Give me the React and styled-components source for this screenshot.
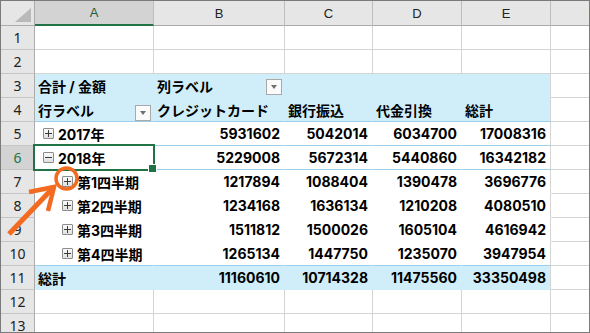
import React from "react";
import styled, { createGlobalStyle, css } from "styled-components";

const BLUE = "#d0eef9";
const BLUE_LINE = "#9dcfec";
const GRID = "#d4d4d4";
const GREEN = "#217346";
const ORANGE = "#f26b21";

const GlobalStyle = createGlobalStyle`
  * { box-sizing: border-box; }
  html, body { margin: 0; padding: 0; background: #fff; }
`;

const Sheet = styled.div`
  position: relative;
  width: 590px;
  height: 333px;
  border: 1px solid #7a7a7a;
  overflow: hidden;
  display: grid;
  grid-template-columns: 34px 119px 131px 88px 89px 89px 84px;
  grid-template-rows: 25px;
  grid-auto-rows: 24px;
  font-family: Inter, "Noto Sans CJK JP", sans-serif;
`;

const Corner = styled.div`
  position: relative;
  background: #e6e6e6;
  border-right: 1px solid #ababab;
  border-bottom: 1px solid #ababab;
  &::after {
    content: "";
    position: absolute;
    right: 3px;
    bottom: 3px;
    border-style: solid;
    border-width: 0 0 14px 16px;
    border-color: transparent transparent #b9b9b9 transparent;
  }
`;

const ColHead = styled.div`
  display: flex;
  align-items: center;
  justify-content: center;
  background: ${(p) => (p.$active ? "#d3d3d3" : "#e6e6e6")};
  color: ${(p) => (p.$active ? "#1d5c38" : "#222")};
  border-right: 1px solid #bdbdbd;
  border-bottom: ${(p) => (p.$active ? `2px solid ${GREEN}` : "1px solid #ababab")};
  font: 13px "Liberation Sans", sans-serif;
`;

const RowHead = styled.div`
  display: flex;
  align-items: center;
  justify-content: center;
  background: ${(p) => (p.$active ? "#d3d3d3" : "#e6e6e6")};
  color: ${(p) => (p.$active ? GREEN : "#222")};
  border-right: 1px solid #ababab;
  border-bottom: 1px solid #c6c6c6;
  font: 14px "Noto Sans", sans-serif;
`;

const Cell = styled.div`
  position: relative;
  display: flex;
  align-items: center;
  justify-content: ${(p) => (p.$num ? "flex-end" : "flex-start")};
  gap: 4px;
  padding: 0 ${(p) => (p.$num ? 4 : 2)}px 0 ${(p) => p.$indent ?? 3}px;
  background: ${(p) => p.$bg || "#fff"};
  border-right: 1px solid ${(p) => p.$right || GRID};
  border-bottom: 1px solid ${(p) => p.$bottom || GRID};
  font-size: 14px;
  font-weight: 700;
  color: #000;
  white-space: nowrap;
  ${(p) =>
    p.$active &&
    css`
      z-index: 2;
    `}
`;

const Label = styled.span`
  flex: none;
`;

const Dropdown = styled.span`
  position: relative;
  flex: none;
  width: 16px;
  height: 16px;
  margin-left: auto;
  align-self: ${(p) => (p.$bottom ? "flex-end" : "center")};
  margin-top: ${(p) => (p.$bottom ? 0 : 2)}px;
  background: #fbfbfb;
  border: 1px solid #a9a9a9;
  &::after {
    content: "";
    position: absolute;
    left: 4px;
    top: 5px;
    border-style: solid;
    border-width: 4px 3.5px 0 3.5px;
    border-color: #6e6e6e transparent transparent transparent;
  }
`;

const Toggle = styled.span`
  position: relative;
  flex: none;
  width: 11px;
  height: 11px;
  border: 1px solid #8c8c8c;
  border-radius: 1px;
  background: linear-gradient(#fbfbfb, #e0e0e0);
  &::before {
    content: "";
    position: absolute;
    left: 1px;
    right: 1px;
    top: 4px;
    height: 1px;
    background: #3a3a3a;
  }
  ${(p) =>
    !p.$open &&
    css`
      &::after {
        content: "";
        position: absolute;
        top: 1px;
        bottom: 1px;
        left: 4px;
        width: 1px;
        background: #3a3a3a;
      }
    `}
`;

const ActiveMark = styled.span`
  position: absolute;
  left: -2px;
  top: -2px;
  right: -2px;
  bottom: -2px;
  border: 2px solid ${GREEN};
  pointer-events: none;
  &::after {
    content: "";
    position: absolute;
    right: -4px;
    bottom: -4px;
    width: 7px;
    height: 7px;
    background: ${GREEN};
    border: 1px solid #fff;
  }
`;

const Overlay = styled.svg`
  position: absolute;
  left: -1px;
  top: -1px;
  width: 590px;
  height: 333px;
  pointer-events: none;
  z-index: 5;
`;

const COLS = ["A", "B", "C", "D", "E", "F"];

const BODY = [
  { n: 5, label: "2017年", indent: 8, open: false, bottom: BLUE_LINE, vals: ["5931602", "5042014", "6034700", "17008316"] },
  { n: 6, label: "2018年", indent: 8, open: true, bottom: BLUE_LINE, active: true, vals: ["5229008", "5672314", "5440860", "16342182"] },
  { n: 7, label: "第1四半期", indent: 27, open: false, bottom: "#fff", vals: ["1217894", "1088404", "1390478", "3696776"] },
  { n: 8, label: "第2四半期", indent: 27, open: false, bottom: "#fff", vals: ["1234168", "1636134", "1210208", "4080510"] },
  { n: 9, label: "第3四半期", indent: 27, open: false, bottom: "#fff", vals: ["1511812", "1500026", "1605104", "4616942"] },
  { n: 10, label: "第4四半期", indent: 27, open: false, bottom: BLUE_LINE, vals: ["1265134", "1447750", "1235070", "3947954"] },
];

function EmptyRow({ n }) {
  return (
    <>
      <RowHead>{n}</RowHead>
      {COLS.map((c) => (
        <Cell key={c} />
      ))}
    </>
  );
}

// pivot cells hide their vertical lines; the gridline shows again after column E
function pivotRight(i, bg) {
  return i === 4 ? GRID : bg;
}

export default function App() {
  return (
    <>
      <GlobalStyle />
      <Sheet>
        <Corner />
        {COLS.map((c) => (
          <ColHead key={c} $active={c === "A"}>
            {c}
          </ColHead>
        ))}

        <EmptyRow n={1} />
        <EmptyRow n={2} />

        <RowHead>3</RowHead>
        <Cell $bg={BLUE} $bottom={BLUE} $right={BLUE}>
          合計 / 金額
        </Cell>
        <Cell $bg={BLUE} $bottom={BLUE} $right={BLUE}>
          <Label>列ラベル</Label>
          <Dropdown />
        </Cell>
        <Cell $bg={BLUE} $bottom={BLUE} $right={BLUE} />
        <Cell $bg={BLUE} $bottom={BLUE} $right={BLUE} />
        <Cell $bg={BLUE} $bottom={BLUE} $right={GRID} />
        <Cell />

        <RowHead>4</RowHead>
        <Cell $bg={BLUE} $bottom={BLUE_LINE} $right={BLUE}>
          <Label>行ラベル</Label>
          <Dropdown $bottom />
        </Cell>
        {["クレジットカード", "銀行振込", "代金引換", "総計"].map((t, i) => (
          <Cell key={t} $bg={BLUE} $bottom={BLUE_LINE} $right={pivotRight(i + 1, BLUE)}>
            {t}
          </Cell>
        ))}
        <Cell />

        {BODY.map((r) => (
          <React.Fragment key={r.n}>
            <RowHead $active={r.active}>{r.n}</RowHead>
            <Cell $indent={r.indent} $bottom={r.bottom} $right="#fff" $active={r.active}>
              <Toggle $open={r.open} />
              <Label>{r.label}</Label>
              {r.active && <ActiveMark />}
            </Cell>
            {r.vals.map((v, i) => (
              <Cell key={i} $num $bottom={r.bottom} $right={pivotRight(i + 1, "#fff")}>
                {v}
              </Cell>
            ))}
            <Cell />
          </React.Fragment>
        ))}

        <RowHead>11</RowHead>
        <Cell $bg={BLUE} $bottom={BLUE} $right={BLUE}>
          総計
        </Cell>
        {["11160610", "10714328", "11475560", "33350498"].map((v, i) => (
          <Cell key={i} $num $bg={BLUE} $bottom={BLUE} $right={pivotRight(i + 1, BLUE)}>
            {v}
          </Cell>
        ))}
        <Cell />

        <EmptyRow n={12} />
        <EmptyRow n={13} />

        <Overlay viewBox="0 0 590 333">
          <circle cx="66.5" cy="178.5" r="10.5" fill="none" stroke={ORANGE} strokeWidth="3.5" />
          <line x1="9" y1="234" x2="53" y2="188" stroke={ORANGE} strokeWidth="5" />
          <polyline
            points="29,192 54,187 48,211"
            fill="none"
            stroke={ORANGE}
            strokeWidth="4.5"
            strokeLinejoin="miter"
          />
        </Overlay>
      </Sheet>
    </>
  );
}
